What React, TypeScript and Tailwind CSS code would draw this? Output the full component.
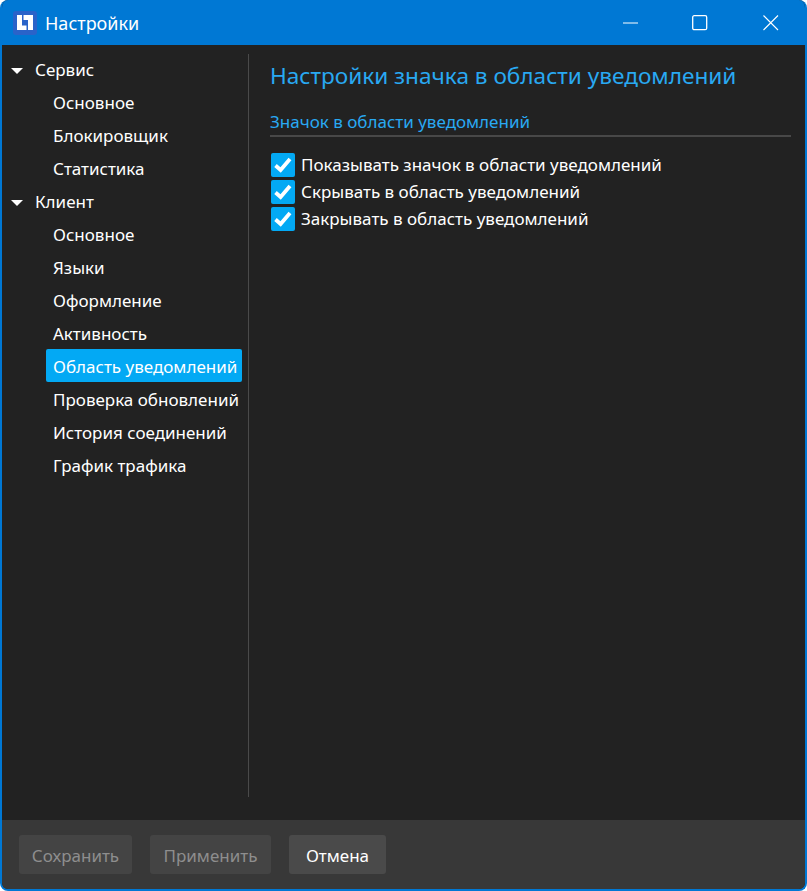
import React from "react";

function Tree({ label }: { label: string }) {
  return (
    <div className="h-[33px] pt-[2px] flex items-center text-[17px] text-white">
      <svg width="12" height="6" viewBox="0 0 12 6" className="ml-[9px] mr-[12px] mt-[2px]">
        <path d="M0 0H12L6 6Z" fill="#ffffff" />
      </svg>
      <span>{label}</span>
    </div>
  );
}

function Item({ label, selected }: { label: string; selected?: boolean }) {
  return (
    <div
      className={
        "h-[33px] pt-[2px] ml-[44px] w-[196px] pl-[7px] flex items-center text-[17px] text-white whitespace-nowrap rounded-[2px] " +
        (selected ? "bg-[#03a9f4]" : "")
      }
    >
      {label}
    </div>
  );
}

function Check({ label }: { label: string }) {
  return (
    <div className="h-[27px] flex items-center text-[17px] text-white">
      <div className="w-[24px] h-[24px] ml-px mr-[6px] rounded-[2px] bg-[#03a9f4] flex items-center justify-center">
        <svg width="20" height="20" viewBox="0 0 20 20">
          <path d="M2.5 10.5L7.6 15L17 4" fill="none" stroke="#ffffff" strokeWidth="3.8" />
        </svg>
      </div>
      <span className="whitespace-nowrap">{label}</span>
    </div>
  );
}

function Btn({ label, w, disabled }: { label: string; w: string; disabled?: boolean }) {
  return (
    <button
      className={
        "h-[39px] pt-[2px] rounded-[3px] text-[17px] flex items-center justify-center " +
        w +
        " " +
        (disabled ? "bg-[#444444] text-[#8e8e8e]" : "bg-[#4a4a4a] text-white")
      }
    >
      {label}
    </button>
  );
}

export default function App() {
  return (
    <div className="w-[807px] h-[891px] bg-white font-['Noto_Sans',sans-serif]">
      <div className="w-full h-full flex flex-col rounded-[8px] overflow-hidden border-2 border-t-0 border-[#0078d4] bg-[#222222]">
        <div className="h-[45px] shrink-0 -mx-[2px] bg-[#0078d4] flex items-center text-white">
          <svg width="24" height="24" viewBox="0 0 24 24" className="ml-[13px] mr-[8px]">
            <rect width="24" height="24" rx="3" fill="#2a63c9" />
            <path d="M4 4H9V14.5H13.5V19H4Z" fill="#ffffff" />
            <path d="M10.5 4H20V19H15V9H10.5Z" fill="#ffffff" />
          </svg>
          <span className="text-[18px] pt-[2px]">Настройки</span>
          <div className="ml-auto flex items-center">
            <svg width="16" height="16" viewBox="0 0 16 16" className="mr-[53px]">
              <path d="M0 8H15" stroke="#fff" strokeWidth="1" />
            </svg>
            <svg width="16" height="16" viewBox="0 0 16 16" className="mr-[55px]">
              <rect x="0.7" y="0.7" width="14" height="14" rx="1.5" fill="none" stroke="#fff" strokeWidth="1.3" />
            </svg>
            <svg width="16" height="16" viewBox="0 0 16 16" className="mr-[28px]">
              <path d="M0.5 0.5L15 15M15 0.5L0.5 15" stroke="#fff" strokeWidth="1.1" />
            </svg>
          </div>
        </div>
        <div className="flex-1 flex min-h-0 pt-[9px] pb-[23px]">
          <div className="w-[247px] border-r border-[#4a4a4a] -mr-px shrink-0">
            <div className="-mt-[2px]">
              <Tree label="Сервис" />
              <Item label="Основное" />
              <Item label="Блокировщик" />
              <Item label="Статистика" />
              <Tree label="Клиент" />
              <Item label="Основное" />
              <Item label="Языки" />
              <Item label="Оформление" />
              <Item label="Активность" />
              <Item label="Область уведомлений" selected />
              <Item label="Проверка обновлений" />
              <Item label="История соединений" />
              <Item label="График трафика" />
            </div>
          </div>
          <div className="flex-1 pl-[22px] pr-[14px]">
            <div className="text-[22.6px] leading-[30px] mt-[7px] text-[#29a9f2] whitespace-nowrap">
              Настройки значка в области уведомлений
            </div>
            <div className="mt-[19px] h-[27px] border-b-2 border-[#484848] text-[17px] leading-[24px] text-[#29a9f2]">
              Значок в области уведомлений
            </div>
            <div className="mt-[14px]">
              <Check label="Показывать значок в области уведомлений" />
              <Check label="Скрывать в область уведомлений" />
              <Check label="Закрывать в область уведомлений" />
            </div>
          </div>
        </div>
        <div className="h-[69px] shrink-0 bg-[#383838] flex items-start pt-[15px] pl-[17px] gap-[18px]">
          <Btn label="Сохранить" w="w-[113px]" disabled />
          <Btn label="Применить" w="w-[121px]" disabled />
          <Btn label="Отмена" w="w-[97px]" />
        </div>
      </div>
    </div>
  );
}
